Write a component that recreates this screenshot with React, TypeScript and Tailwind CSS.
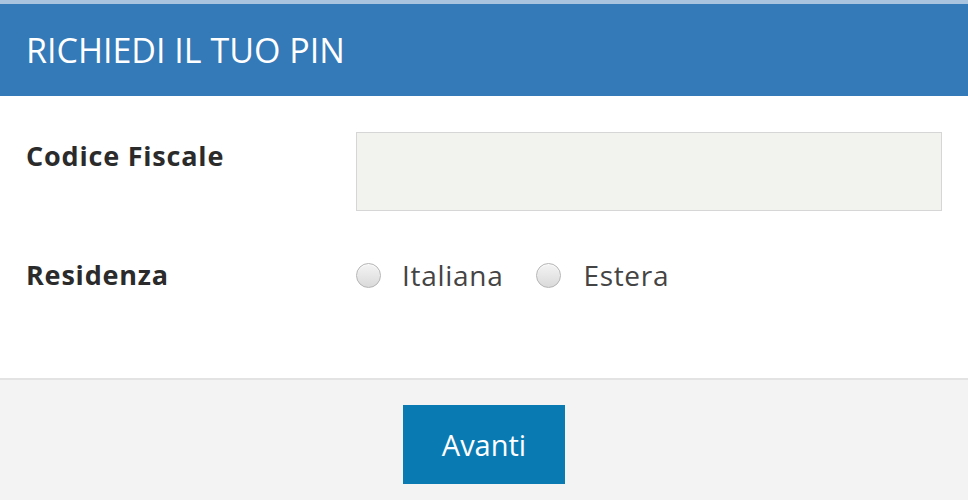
import React from 'react';

export default function App() {
  return (
    <div className="w-[968px] h-[500px] bg-white flex flex-col font-['Open_Sans',sans-serif] overflow-hidden">
      {/* Header */}
      <div className="h-[4px] bg-[#a8c4df]" />
      <div className="h-[92px] bg-[#3479b8] flex items-center px-[26px]">
        <h1 className="text-white text-[34px] font-normal leading-none">RICHIEDI IL TUO PIN</h1>
      </div>

      {/* Body */}
      <div className="h-[282px] px-[26px] pt-[36px] flex flex-col gap-[44px]">
        <div className="flex items-start">
          <label className="w-[330px] pt-[4px] text-[27px] leading-[40px] font-bold text-[#2b2b2b] tracking-[0.8px]">
            Codice Fiscale
          </label>
          <input
            type="text"
            className="w-[587px] h-[79px] bg-[#f2f2ee] border border-[#d6d6d6] outline-none"
          />
        </div>
        <div className="flex items-center">
          <span className="w-[330px] text-[27px] leading-[40px] font-bold text-[#2b2b2b] tracking-[0.8px]">Residenza</span>
          <div className="flex items-center text-[28px] leading-[40px] text-[#444] tracking-[0.7px]">
            <span className="w-[25px] h-[25px] rounded-full border border-[#b5b5b5] bg-gradient-to-b from-[#f4f4f4] to-[#dadada] shadow-[inset_0_1px_1px_rgba(255,255,255,0.8)]" />
            <span className="ml-[21px]">Italiana</span>
            <span className="ml-[33px] w-[25px] h-[25px] rounded-full border border-[#b5b5b5] bg-gradient-to-b from-[#f4f4f4] to-[#dadada] shadow-[inset_0_1px_1px_rgba(255,255,255,0.8)]" />
            <span className="ml-[22px]">Estera</span>
          </div>
        </div>
      </div>

      {/* Footer */}
      <div className="flex-1 bg-[#f3f3f3] border-t-2 border-[#e3e3e3] flex justify-center pt-[25px]">
        <button className="w-[162px] h-[79px] bg-[#0a7ab3] text-white text-[29px] leading-none">
          Avanti
        </button>
      </div>
    </div>
  );
}
